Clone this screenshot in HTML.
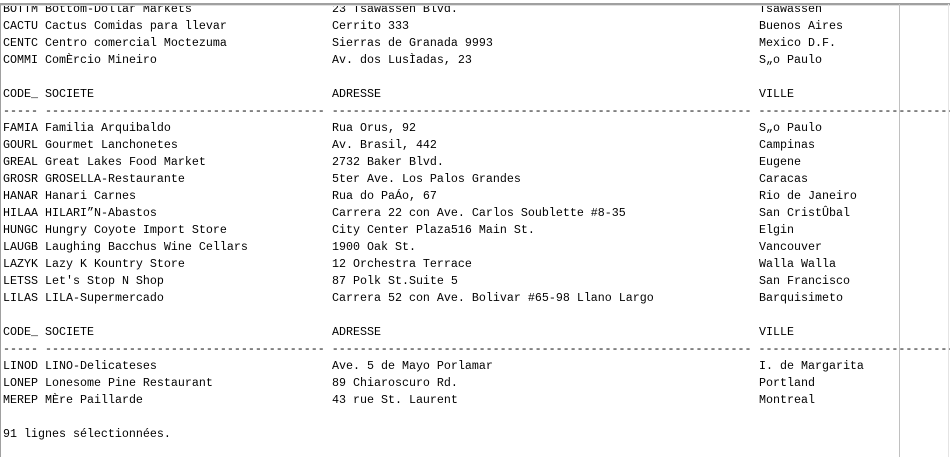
<!DOCTYPE html>
<html><head><meta charset="utf-8"><style>
html,body{margin:0;padding:0;background:#fff;width:950px;height:457px;overflow:hidden;position:relative}
#p{position:absolute;left:3px;top:1px;font-family:"Liberation Mono",monospace;font-size:11.67px;line-height:17px;color:#000}
#p div{height:17px;white-space:pre}
#p span{display:inline-block}
.a{width:42px}.b{width:287px}.c{width:427px}
.t{position:absolute;left:0;top:3px;width:950px;height:2px;background:#a0a0a0;border-bottom:1px solid #e0e0e0}
.l{position:absolute;left:0;top:3px;width:1px;height:454px;background:#a0a0a0}
.v{position:absolute;left:899px;top:4px;width:1px;height:453px;background:#c0c0c0}
.r{position:absolute;left:948px;top:4px;width:1px;height:453px;background:#e4e4e4}
</style></head><body>
<div id="p"><div><span class="a">BOTTM</span><span class="b">Bottom-Dollar Markets</span><span class="c">23 Tsawassen Blvd.</span>Tsawassen</div><div><span class="a">CACTU</span><span class="b">Cactus Comidas para llevar</span><span class="c">Cerrito 333</span>Buenos Aires</div><div><span class="a">CENTC</span><span class="b">Centro comercial Moctezuma</span><span class="c">Sierras de Granada 9993</span>Mexico D.F.</div><div><span class="a">COMMI</span><span class="b">ComÈrcio Mineiro</span><span class="c">Av. dos LusÌadas, 23</span>S„o Paulo</div><div></div><div><span class="a">CODE_</span><span class="b">SOCIETE</span><span class="c">ADRESSE</span>VILLE</div><div>----- ---------------------------------------- ------------------------------------------------------------ ------------------------------</div><div><span class="a">FAMIA</span><span class="b">Familia Arquibaldo</span><span class="c">Rua Orus, 92</span>S„o Paulo</div><div><span class="a">GOURL</span><span class="b">Gourmet Lanchonetes</span><span class="c">Av. Brasil, 442</span>Campinas</div><div><span class="a">GREAL</span><span class="b">Great Lakes Food Market</span><span class="c">2732 Baker Blvd.</span>Eugene</div><div><span class="a">GROSR</span><span class="b">GROSELLA-Restaurante</span><span class="c">5ter Ave. Los Palos Grandes</span>Caracas</div><div><span class="a">HANAR</span><span class="b">Hanari Carnes</span><span class="c">Rua do PaÁo, 67</span>Rio de Janeiro</div><div><span class="a">HILAA</span><span class="b">HILARI”N-Abastos</span><span class="c">Carrera 22 con Ave. Carlos Soublette #8-35</span>San CristÛbal</div><div><span class="a">HUNGC</span><span class="b">Hungry Coyote Import Store</span><span class="c">City Center Plaza516 Main St.</span>Elgin</div><div><span class="a">LAUGB</span><span class="b">Laughing Bacchus Wine Cellars</span><span class="c">1900 Oak St.</span>Vancouver</div><div><span class="a">LAZYK</span><span class="b">Lazy K Kountry Store</span><span class="c">12 Orchestra Terrace</span>Walla Walla</div><div><span class="a">LETSS</span><span class="b">Let's Stop N Shop</span><span class="c">87 Polk St.Suite 5</span>San Francisco</div><div><span class="a">LILAS</span><span class="b">LILA-Supermercado</span><span class="c">Carrera 52 con Ave. Bolivar #65-98 Llano Largo</span>Barquisimeto</div><div></div><div><span class="a">CODE_</span><span class="b">SOCIETE</span><span class="c">ADRESSE</span>VILLE</div><div>----- ---------------------------------------- ------------------------------------------------------------ ------------------------------</div><div><span class="a">LINOD</span><span class="b">LINO-Delicateses</span><span class="c">Ave. 5 de Mayo Porlamar</span>I. de Margarita</div><div><span class="a">LONEP</span><span class="b">Lonesome Pine Restaurant</span><span class="c">89 Chiaroscuro Rd.</span>Portland</div><div><span class="a">MEREP</span><span class="b">MÈre Paillarde</span><span class="c">43 rue St. Laurent</span>Montreal</div><div></div><div>91 lignes sélectionnées.</div></div>
<div class="t"></div><div class="l"></div><div class="v"></div><div class="r"></div>
</body></html>
